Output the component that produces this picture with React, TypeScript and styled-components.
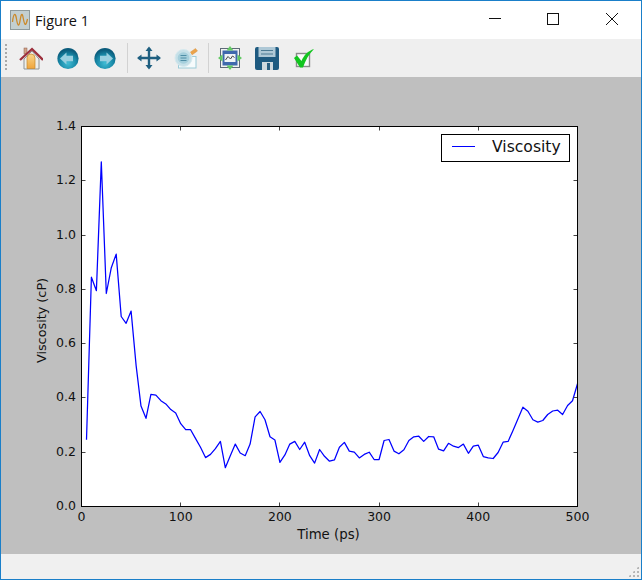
import React from "react";
import styled, { createGlobalStyle } from "styled-components";

const GlobalStyle = createGlobalStyle`
  html, body {
    margin: 0;
    padding: 0;
    background: #fff;
  }
`;

// viscosity samples, one every 5 ps
const SAMPLES = [
  0.246, 0.845, 0.795, 1.27, 0.785, 0.88, 0.93, 0.7, 0.675, 0.72, 0.52, 0.37, 0.325, 0.413, 0.41, 0.39, 0.378, 0.357,
  0.345, 0.305, 0.283, 0.283, 0.25, 0.218, 0.18, 0.192, 0.213, 0.24, 0.143, 0.187, 0.23, 0.197, 0.187, 0.23, 0.33, 0.35,
  0.32, 0.257, 0.245, 0.163, 0.19, 0.23, 0.24, 0.21, 0.237, 0.187, 0.16, 0.21, 0.185, 0.167, 0.172, 0.218, 0.236, 0.204,
  0.2, 0.179, 0.192, 0.2, 0.173, 0.173, 0.243, 0.247, 0.204, 0.194, 0.209, 0.243, 0.257, 0.259, 0.24, 0.258, 0.257,
  0.211, 0.205, 0.233, 0.222, 0.217, 0.23, 0.196, 0.222, 0.226, 0.184, 0.179, 0.177, 0.199, 0.237, 0.24, 0.28, 0.323,
  0.366, 0.351, 0.32, 0.311, 0.317, 0.339, 0.352, 0.355, 0.339, 0.372, 0.39, 0.452,
];

const X_TICKS = [0, 100, 200, 300, 400, 500];
const Y_TICKS = [0, 0.2, 0.4, 0.6, 0.8, 1.0, 1.2, 1.4];

const px = (time: number): number => 81.5 + time * 0.992;
const py = (value: number): number => 506.5 - value * 271.4;

const Plot: React.FC = () => {
  const points = SAMPLES.map((value, index) => `${px((index + 1) * 5).toFixed(1)},${py(value).toFixed(1)}`).join(" ");
  return (
    <PlotSvg viewBox="1 77 640 477">
      <rect x="81.5" y="126.5" width="496" height="380" fill="#fff" />
      <polyline points={points} fill="none" stroke="#0000ff" strokeWidth="1.25" strokeLinejoin="round" />
      {X_TICKS.map((tick) => {
        const x = Math.floor(px(tick)) + 0.5;
        return (
          <g key={tick}>
            {tick > 0 && tick < 500 && <path d={`M${x} 126.5v4M${x} 506.5v-4`} stroke="#444" strokeWidth="1" />}
            <TickLabel x={px(tick)} y={521} textAnchor="middle">
              {tick}
            </TickLabel>
          </g>
        );
      })}
      {Y_TICKS.map((tick) => {
        const y = Math.floor(py(tick)) + 0.5;
        return (
          <g key={tick}>
            {tick > 0 && tick < 1.4 && <path d={`M81.5 ${y}h4M577.5 ${y}h-4`} stroke="#444" strokeWidth="1" />}
            <TickLabel x={76} y={py(tick) + 3.5} textAnchor="end">
              {tick.toFixed(1)}
            </TickLabel>
          </g>
        );
      })}
      <rect x="81.5" y="126.5" width="496" height="380" fill="none" stroke="#000" strokeWidth="1" />
      <rect x="441.5" y="134.5" width="128" height="27" fill="#fff" stroke="#000" strokeWidth="1" />
      <line x1="452" y1="146.5" x2="475" y2="146.5" stroke="#0000ff" strokeWidth="1" />
      <LegendLabel x={492} y={152}>
        Viscosity
      </LegendLabel>
      <AxisLabel x={328.5} y={539} textAnchor="middle">
        Time (ps)
      </AxisLabel>
      <YAxisLabel transform="translate(46 320.5) rotate(-90)" textAnchor="middle">
        Viscosity (cP)
      </YAxisLabel>
    </PlotSvg>
  );
};

const WindowIcon: React.FC = () => (
  <svg width="20" height="20" viewBox="0 0 20 20">
    <rect x="0.5" y="0.5" width="19" height="19" fill="#c3cfd0" stroke="#8f9a9b" />
    <path d="M2.5 12C3.5 2.5 5.5 2.500 6.500 9S9 17.500 10 11 12 1.500 13.200 8 15.500 18 17.500 9" fill="none" stroke="#cc8a2a" strokeWidth="1.3" />
  </svg>
);

const HomeIcon: React.FC = () => (
  <svg width="24" height="24" viewBox="0 0 24 24">
    <defs>
      <linearGradient id="door" x1="0" y1="0" x2="0" y2="1">
        <stop offset="0%" stopColor="#f9d58a" />
        <stop offset="100%" stopColor="#f0a53c" />
      </linearGradient>
    </defs>
    <rect x="5" y="2" width="3" height="6" fill="#d2a488" stroke="#8a5a4a" strokeWidth="0.5" />
    <path d="M5 13 13 5l7 8v10H5z" fill="#eeeeea" stroke="#8e9396" />
    <path d="M8 22.500V12a4 4 0 0 1 8 0v10.500z" fill="url(#door)" stroke="#c4862c" strokeWidth="0.7" />
    <path d="M1 14 13 3l11 11" fill="none" stroke="#9c2f3c" strokeWidth="2.3" />
  </svg>
);

const ArrowDisc: React.FC<{ id: string; flip?: boolean }> = ({ id, flip }) => (
  <svg width="24" height="24" viewBox="0 0 24 24">
    <defs>
      <radialGradient id={id} cx="50%" cy="72%" r="62%">
        <stop offset="0%" stopColor="#41bcd4" />
        <stop offset="65%" stopColor="#1787a6" />
        <stop offset="100%" stopColor="#0b5c7c" />
      </radialGradient>
    </defs>
    <circle cx="12" cy="12.500" r="10.600" fill={`url(#${id})`} />
    <path
      d={flip ? "M13.500 6.500 20 12.500l-6.500 6V15.200H7V9.800h6.500z" : "M10.500 6.500 4 12.500l6.500 6V15.200H17V9.800h-6.500z"}
      fill="#98cfe0"
    />
  </svg>
);

const MoveIcon: React.FC = () => (
  <svg width="24" height="24" viewBox="0 0 24 24">
    <path d="M12 2v20M1.500 12h21" stroke="#1f5f80" strokeWidth="2.400" />
    <path d="M12 0.500 15.500 5h-7zM12 23.500 8.500 19h7zM0 12l4.500-3.500v7zM24 12l-4.500-3.500v7z" fill="#1f5f80" />
  </svg>
);

const SubplotsIcon: React.FC = () => (
  <svg width="24" height="24" viewBox="0 0 24 24">
    <rect x="4.500" y="10.500" width="17.500" height="11.500" fill="#f6fbfc" stroke="#9ccbd8" />
    <path d="M13 8.500 21.500 2.500l2 2.500L15 11z" fill="#eca34a" stroke="#cf8a34" strokeWidth="0.4" />
    <circle cx="9.500" cy="12" r="8.500" fill="#c6e0e8" stroke="#d6e9ee" />
    <circle cx="9.500" cy="12" r="5.800" fill="#a5cfdc" />
    <path d="M6.500 9.500h6M6.500 12h6M6.500 14.500h6" stroke="#4f8ea6" strokeWidth="1" />
  </svg>
);

const ConfigureIcon: React.FC = () => (
  <svg width="24" height="24" viewBox="0 0 24 24">
    <rect x="2.500" y="2.500" width="19" height="19" fill="#f1f1f1" stroke="#5d6a78" />
    <rect x="4.500" y="4.500" width="15" height="15" fill="#3f68ad" />
    <rect x="6.500" y="8" width="11" height="8" fill="#eef3f6" />
    <path d="M7.500 14 10 10.500l2.500 2.500 2-3 2 1.500" fill="none" stroke="#444" strokeWidth="1" />
    <path d="M12 0 15.500 4.500h-7zM12 24l-3.500-4.500h7zM0 12l4.500-3.500v7zM24 12l-4.500-3.500v7z" fill="#62c963" />
  </svg>
);

const SaveIcon: React.FC = () => (
  <svg width="24" height="24" viewBox="0 0 24 24">
    <rect x="0" y="1" width="24" height="23" rx="2" fill="#1e5a80" />
    <rect x="3.500" y="1" width="17" height="10" fill="#aec8d6" />
    <path d="M6 4.500h12M6 8h12" stroke="#4d7b94" strokeWidth="1.200" />
    <rect x="7" y="16" width="11" height="8" fill="#cfd9de" />
    <rect x="12" y="17" width="3" height="7" fill="#2b5f80" />
  </svg>
);

const CheckIcon: React.FC = () => (
  <svg width="24" height="24" viewBox="0 0 24 24">
    <rect x="4.500" y="7.500" width="13" height="13" fill="#fafafa" stroke="#8b8b8b" strokeWidth="1.400" />
    <path d="M2 12 5 9.500 9.500 15C12 9 16 5 22 3 17 8 13.500 14 11 21.500H8z" fill="#12c51f" />
  </svg>
);

const App: React.FC = () => {
  return (
    <Window>
      <GlobalStyle />
      <TitleBar>
        <TitleIcon>
          <WindowIcon />
        </TitleIcon>
        <Title>Figure 1</Title>
        <Controls>
          <ControlButton>
            <svg width="12" height="12" viewBox="0 0 12 12">
              <path d="M0 5.500h12" stroke="#111" />
            </svg>
          </ControlButton>
          <ControlButton>
            <svg width="12" height="12" viewBox="0 0 12 12">
              <rect x="0.500" y="0.500" width="11" height="11" fill="none" stroke="#111" />
            </svg>
          </ControlButton>
          <ControlButton>
            <svg width="12" height="12" viewBox="0 0 12 12">
              <path d="M0 0l12 12M12 0L0 12" stroke="#111" />
            </svg>
          </ControlButton>
        </Controls>
      </TitleBar>
      <Toolbar>
        <Grip />
        <ToolButton>
          <HomeIcon />
        </ToolButton>
        <ToolButton>
          <ArrowDisc id="back" />
        </ToolButton>
        <ToolButton>
          <ArrowDisc id="forward" flip />
        </ToolButton>
        <Separator />
        <ToolButton>
          <MoveIcon />
        </ToolButton>
        <ToolButton>
          <SubplotsIcon />
        </ToolButton>
        <Separator />
        <ToolButton>
          <ConfigureIcon />
        </ToolButton>
        <ToolButton>
          <SaveIcon />
        </ToolButton>
        <ToolButton>
          <CheckIcon />
        </ToolButton>
      </Toolbar>
      <Canvas>
        <Plot />
      </Canvas>
      <StatusBar>
        <SizeGrip />
      </StatusBar>
    </Window>
  );
};

export default App;

const Window = styled.div`
  box-sizing: border-box;
  width: 642px;
  height: 580px;
  display: flex;
  flex-direction: column;
  border: 1px solid #1a7fc9;
  background: #fff;
  overflow: hidden;
`;

const TitleBar = styled.div`
  height: 38px;
  flex: none;
  display: flex;
  align-items: center;
  background: #fff;
`;

const TitleIcon = styled.div`
  display: flex;
  margin: 0 5px 0 9px;
`;

const Title = styled.div`
  flex: 1;
  font-family: "Open Sans", "Liberation Sans", sans-serif;
  font-size: 14.5px;
  color: #111;
`;

const Controls = styled.div`
  display: flex;
  height: 100%;
`;

const ControlButton = styled.div`
  width: 58.5px;
  box-sizing: border-box;
  padding-bottom: 2px;
  display: flex;
  align-items: center;
  justify-content: center;
`;

const Toolbar = styled.div`
  height: 38px;
  flex: none;
  display: flex;
  align-items: center;
  background: #efefef;
`;

const Grip = styled.div`
  width: 2px;
  height: 28px;
  margin: 0 5.5px 0 4px;
  background: repeating-linear-gradient(to bottom, #a9a9a9 0 2px, transparent 2px 4px);
`;

const ToolButton = styled.div`
  width: 37px;
  height: 100%;
  flex: none;
  display: flex;
  align-items: center;
  justify-content: center;
`;

const Separator = styled.div`
  width: 1px;
  height: 30px;
  margin: 0 2.5px 0 3.5px;
  background: #d2d2d2;
`;

const Canvas = styled.div`
  flex: 1;
  display: flex;
  background: #bfbfbf;
`;

const PlotSvg = styled.svg`
  width: 640px;
  height: 477px;
  display: block;
`;

const TickLabel = styled.text`
  font-family: "DejaVu Sans", sans-serif;
  font-size: 12.5px;
  fill: #111;
`;

const AxisLabel = styled.text`
  font-family: "DejaVu Sans", sans-serif;
  font-size: 13.3px;
  fill: #111;
`;

const YAxisLabel = styled(AxisLabel)`
  font-size: 12.8px;
`;

const LegendLabel = styled.text`
  font-family: "DejaVu Sans", sans-serif;
  font-size: 15.6px;
  fill: #111;
`;

const StatusBar = styled.div`
  height: 25px;
  flex: none;
  display: flex;
  justify-content: flex-end;
  align-items: flex-end;
  background: #f0f0f0;
`;

const SizeGrip = styled.div`
  width: 11px;
  height: 11px;
  margin: 0 2px 2px 0;
  background-image: radial-gradient(circle, #b5b5b5 1.4px, transparent 1.5px);
  background-size: 4px 4px;
  clip-path: polygon(100% 0, 100% 100%, 0 100%);
`;
